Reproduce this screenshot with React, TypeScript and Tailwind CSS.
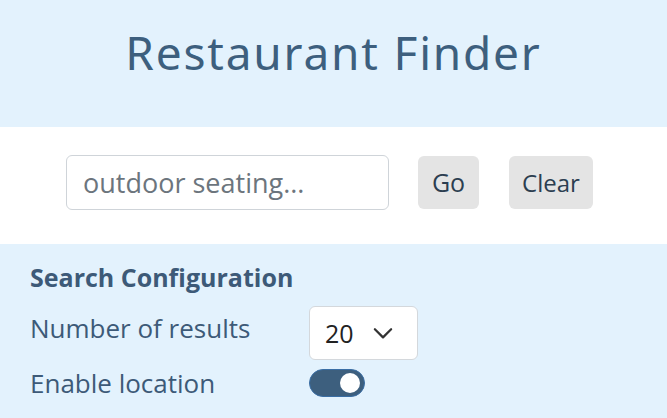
import React, { useState } from "react";

export default function App() {
  const [query, setQuery] = useState("");
  const [count, setCount] = useState("20");
  const [locOn, setLocOn] = useState(true);

  return (
    <div className="w-[667px] h-[418px] overflow-hidden bg-[#e3f2fd]" style={{ fontFamily: '"Open Sans", "Noto Sans", sans-serif' }}>
      {/* Header */}
      <header className="h-[127px] pt-[29px] text-center">
        <h1 className="text-[46px] leading-none tracking-[1.8px] text-[#3d5f7e]" style={{ fontFamily: '"Noto Sans", "DejaVu Sans", sans-serif' }}>
          Restaurant Finder
        </h1>
      </header>

      {/* Search bar */}
      <div className="h-[117px] bg-white flex items-start pt-[28px] pl-[66px]">
        <input
          value={query}
          onChange={(e) => setQuery(e.target.value)}
          placeholder="outdoor seating..."
          className="w-[323px] h-[55px] rounded-[6px] border border-[#cfd4d9] px-[16px] text-[27px] text-[#333] placeholder:text-[#6c757d] outline-none"
        />
        <button className="ml-[29px] mt-[1px] w-[61px] h-[53px] rounded-[6px] bg-[#e4e4e4] text-[25px] text-[#2c3e50]">Go</button>
        <button className="ml-[30px] mt-[1px] w-[84px] h-[53px] rounded-[6px] bg-[#e4e4e4] text-[24px] text-[#2c3e50]">Clear</button>
      </div>

      {/* Config */}
      <section className="px-[30px] pt-[17px] text-[#3d5a78]">
        <h2 className="text-[25px] font-bold leading-[32px]">Search Configuration</h2>
        <div className="flex items-center mt-[13px]">
          <span className="w-[279px] text-[26px] leading-[36px] mb-[10px]">Number of results</span>
          <div className="w-[109px] h-[54px] bg-white rounded-[6px] border border-[#d4d8dc] flex items-center pl-[15px] text-[#222]">
            <span className="text-[25px] leading-none">{count}</span>
            <svg width="20" height="20" viewBox="0 0 16 16" className="ml-[19px]" onClick={() => setCount(count === "20" ? "10" : "20")}>
              <path d="M1.5 5 8 11.5 14.5 5" fill="none" stroke="#333" strokeWidth="1.8" strokeLinecap="round" strokeLinejoin="round" />
            </svg>
          </div>
        </div>
        <div className="flex items-center mt-[5px]">
          <span className="w-[279px] text-[26px] leading-[36px]">Enable location</span>
          <button
            onClick={() => setLocOn(!locOn)}
            className="w-[56px] h-[28px] rounded-full bg-[#3d5f7e] border border-[#3a6ea5] flex items-center justify-end pr-[4px]"
          >
            <span className="w-[20px] h-[20px] rounded-full bg-white" />
          </button>
        </div>
      </section>
    </div>
  );
}
